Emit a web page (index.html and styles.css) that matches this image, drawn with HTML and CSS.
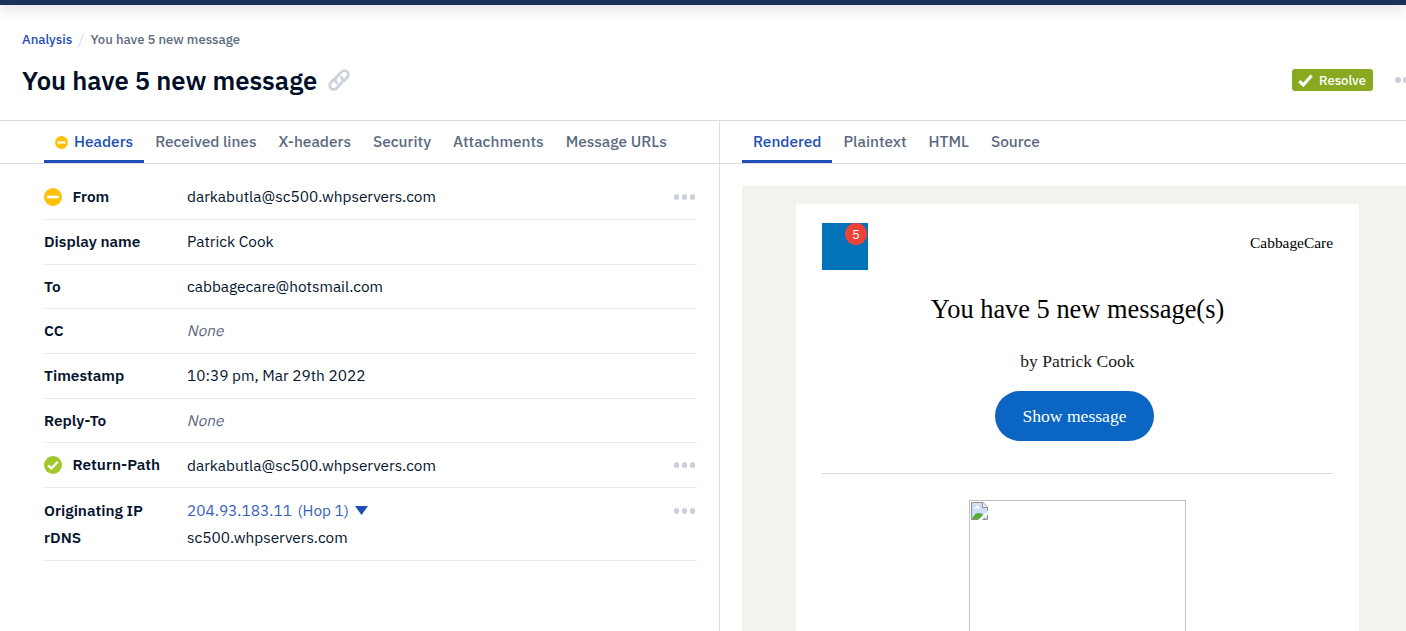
FILE: index.html
```html
<!DOCTYPE html>
<html lang="en">
<head>
<meta charset="utf-8">
<title>You have 5 new message</title>
<link rel="stylesheet" href="styles.css">
</head>
<body>
<div class="topbar"></div>
<header class="page-header">
  <nav class="crumbs"><a class="crumb-link">Analysis</a><svg class="slash" viewBox="0 0 6 15"><path d="M5.5 .5L.5 14.500" stroke="#dadce6" fill="none"/></svg><span>You have 5 new message</span></nav>
  <div class="title-row">
    <h1 class="title">You have 5 new message</h1>
    <svg class="link-icon" viewBox="0.600 0.600 20.800 20.800" fill="none" stroke="#cdd2dc" stroke-width="2.700"><path d="M9.800 14.400L8.500 13.400a3.600 3.600 0 0 1 0-5L13.400 3.300a3.700 3.700 0 0 1 5.300 5.300L15.200 12.200"/><path d="M12.200 7.600L13.500 8.600a3.600 3.600 0 0 1 0 5L8.600 18.700a3.700 3.700 0 0 1-5.300-5.300L6.800 9.800"/></svg>
    <button class="resolve"><svg class="tick" viewBox="0 0 15 13"><path d="M1.300 7.200L5.300 11 13.600 1.500" fill="none" stroke="#fff" stroke-width="3.200"/></svg><span>Resolve</span></button>
    <span class="dots"><i></i><i></i><i></i></span>
  </div>
</header>
<main class="panes">
  <section class="pane-left">
    <nav class="tabs tabs-left">
      <a class="tab active"><svg class="tab-icon" viewBox="0 0 18 18"><circle cx="9" cy="9" r="9" fill="#ffc107"/><rect x="3.500" y="7.500" width="11" height="3" fill="#fff"/></svg><span>Headers</span></a>
      <a class="tab">Received lines</a>
      <a class="tab">X-headers</a>
      <a class="tab">Security</a>
      <a class="tab">Attachments</a>
      <a class="tab">Message URLs</a>
    </nav>
    <div class="rows">
      <div class="row"><div class="label"><svg class="status" viewBox="0 0 18 18"><circle cx="9" cy="9" r="9" fill="#ffc107"/><rect x="3" y="7.700" width="12" height="2.600" fill="#fff"/></svg><span>From</span></div><div class="value">darkabutla@sc500.whpservers.com</div><span class="dots"><i></i><i></i><i></i></span></div>
      <div class="row"><div class="label">Display name</div><div class="value">Patrick Cook</div></div>
      <div class="row"><div class="label">To</div><div class="value">cabbagecare@hotsmail.com</div></div>
      <div class="row"><div class="label">CC</div><div class="value none">None</div></div>
      <div class="row"><div class="label">Timestamp</div><div class="value">10:39 pm, Mar 29th 2022</div></div>
      <div class="row"><div class="label">Reply-To</div><div class="value none">None</div></div>
      <div class="row"><div class="label"><svg class="status" viewBox="0 0 18 18"><circle cx="9" cy="9" r="9" fill="#a0c828"/><path d="M4.200 9.300l3.200 3.100 6.400-6.600" fill="none" stroke="#fff" stroke-width="2.300"/></svg><span>Return-Path</span></div><div class="value value-low">darkabutla@sc500.whpservers.com</div><span class="dots"><i></i><i></i><i></i></span></div>
      <div class="row row-tall">
        <div class="pair"><div class="label">Originating IP</div><div class="value hop"><span>204.93.183.11</span><span class="hop-n">(Hop 1)</span><svg class="caret" viewBox="0 0 13 9"><path d="M0 0h13L6.500 9z" fill="#204fb3"/></svg></div><span class="dots"><i></i><i></i><i></i></span></div>
        <div class="pair"><div class="label">rDNS</div><div class="value">sc500.whpservers.com</div></div>
      </div>
    </div>
  </section>
  <section class="pane-right">
    <nav class="tabs tabs-right">
      <a class="tab active">Rendered</a>
      <a class="tab">Plaintext</a>
      <a class="tab">HTML</a>
      <a class="tab">Source</a>
    </nav>
    <div class="preview">
      <article class="mail">
        <div class="mail-head"><div class="logo"><span class="badge">5</span></div><span class="recipient">CabbageCare</span></div>
        <h2 class="mail-title">You have 5 new message(s)</h2>
        <p class="mail-by">by Patrick Cook</p>
        <a class="mail-button">Show message</a>
        <hr class="mail-rule">
        <div class="broken-image"><svg class="broken-icon" viewBox="0 0 17 18"><path d="M.5 .5H12L16.500 5V17.500H.5z" fill="#cddcf8" stroke="#909090"/><path d="M11.500 .5V5.500H16.500" fill="#eee" stroke="#909090"/><path d="M3 6.500q0-1.500 1.500-1.500Q5 3 6.500 3.500T8 5.500q1 .2 1 1z" fill="#fff"/><path d="M1 17q1-3 3.500-5t7 0L14 17z" fill="#57ad33"/><path d="M17 8.500L7 18H11L17 12.500z" fill="#fff"/></svg></div>
      </article>
    </div>
  </section>
</main>
</body>
</html>
```
FILE: styles.css
```css
* { box-sizing: border-box; }
html { height: 631px; overflow: hidden; }
body { margin: 0; height: 631px; overflow: hidden; background: #fff; color: #04142d; font-family: "IBM Plex Sans", "Noto Sans", sans-serif; font-size: 15.400px; line-height: 20px; display: flex; flex-direction: column; }
.topbar { height: 5px; flex: none; background: #1a3259; box-shadow: 0 0 15px rgba(20, 30, 60, .35); }
.page-header { height: 116px; flex: none; padding: 25px 0 0 22px; border-bottom: 1px solid #dcdde4; overflow-x: clip; }
.crumbs { display: flex; align-items: center; height: 20px; font-size: 13.100px; font-weight: 500; color: #5b6980; white-space: nowrap; }
.crumb-link { width: 50px; color: #204fb3; }
.slash { width: 6px; height: 15px; margin: 0 6.500px 0 6px; }
.title-row { display: flex; align-items: center; height: 36px; margin-top: 12px; }
.title { margin: 0; padding-top: 2px; width: 306px; flex: none; font-size: 25.600px; line-height: 36px; font-weight: 600; color: #020f28; white-space: nowrap; }
.link-icon { width: 22px; height: 22px; flex: none; }
.resolve { margin-left: 942px; flex: none; display: flex; align-items: center; width: 81px; height: 22px; padding: 0 6px; border: 0; border-radius: 3px; background: #89a920; color: #fff; font: 500 13.100px "IBM Plex Sans", "Noto Sans", sans-serif; }
.tick { width: 15px; height: 13px; margin-right: 6px; }
.dots { display: flex; gap: 2.500px; flex: none; }
.dots i { width: 5.500px; height: 5.500px; border-radius: 50%; background: #cacfda; }
.title-row .dots { margin-left: 22px; }
.panes { flex: 1; display: flex; min-height: 0; }
.pane-left { width: 720px; flex: none; border-right: 1px solid #dcdde4; }
.pane-right { flex: 1; min-width: 0; display: flex; flex-direction: column; }
.tabs { display: flex; height: 43px; flex: none; border-bottom: 1px solid #dcdde4; color: #5b6980; font-weight: 500; white-space: nowrap; }
.tabs-left { padding-left: 44px; }
.tabs-right { padding-left: 22px; }
.tab { display: flex; align-items: center; justify-content: center; height: 42px; padding: 0 11px 2px; }
.active { color: #204fb3; border-bottom: 3px solid #204fb3; padding: 1px 11px 0; }
.tab-icon { width: 13px; height: 13px; margin: 2px 6px 0 0; }
.rows { margin: 11.400px 22px 0 44px; }
.row { display: flex; align-items: center; height: 44.670px; border-bottom: 1px solid #ececf0; }
.label { width: 143px; display: flex; align-items: center; font-weight: 600; white-space: nowrap; padding-bottom: 2px; }
.status { width: 18px; height: 18px; margin: 2px 10.500px 0 0; }
.value { flex: 1; white-space: nowrap; padding-bottom: 2px; }
.value-low { padding-bottom: 0; }
.none { color: #5b6980; transform: skewX(-13deg); padding-left: 1px; }
.row .dots { margin-right: 2px; }
.row-tall { display: block; height: 73px; padding-top: 9.600px; }
.pair { display: flex; align-items: center; height: 27px; }
.hop { display: flex; align-items: center; color: #3561bd; }
.hop-n { margin-left: 5.500px; }
.caret { width: 13px; height: 9px; margin-left: 6px; }
.preview { flex: 1; margin: 22px 0 0 22px; padding: 18px 47px 0 54px; background: #f3f2ee; min-height: 0; overflow: hidden; }
.mail { height: 100%; padding: 19px 26px 0; overflow: hidden; background: #fff; color: #000; font-family: "Liberation Serif", serif; display: flex; flex-direction: column; align-items: center; white-space: nowrap; }
.mail-head { width: 100%; height: 47px; display: flex; justify-content: space-between; flex: none; }
.logo { width: 46px; background: #0073b9; display: flex; justify-content: flex-end; padding-right: 1px; }
.badge { width: 22px; height: 22px; border-radius: 50%; background: #ec4339; color: #fff; text-align: center; font: 13.200px/23px "IBM Plex Sans", "Noto Sans", sans-serif; }
.recipient { font-size: 15.400px; line-height: 40px; }
.mail-title { margin: 19px 0 0; font-size: 26.400px; line-height: 40px; font-weight: 400; }
.mail-by { margin: 22px 0 0; font-size: 17.600px; line-height: 20px; color: #1a1a1a; }
.mail-button { width: 159px; height: 50px; flex: none; margin: 20px 6px 0 0; border-radius: 25px; background: #0a66c2; color: #fff; font-size: 17.600px; line-height: 51px; text-align: center; }
.mail-rule { width: 100%; margin: 32px 0 0; border: 0; border-top: 1px solid #d8d8d8; }
.broken-image { width: 217px; height: 220px; flex: none; margin: 26px 0 0; border: 1px solid #c0c0c0; padding: 1px; }
.broken-icon { display: block; width: 17px; height: 18px; }
```
